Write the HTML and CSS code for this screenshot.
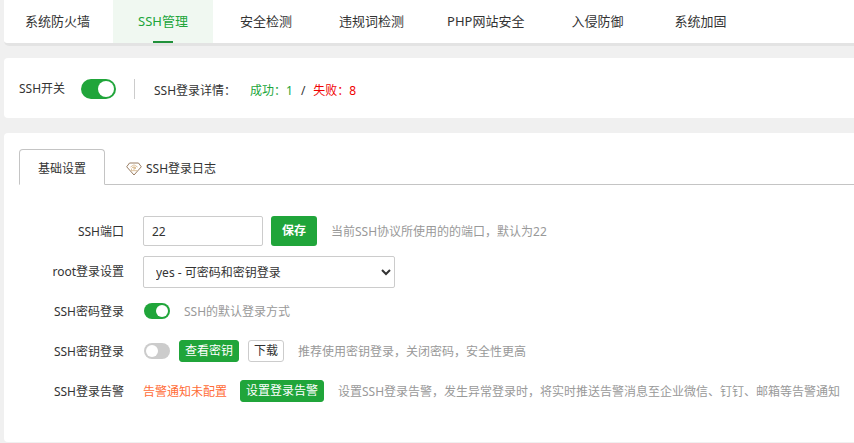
FILE: index.html
```html
<!DOCTYPE html>
<html lang="zh-CN">
<head>
<meta charset="utf-8">
<meta name="viewport" content="width=device-width, initial-scale=1">
<title>SSH管理</title>
<link rel="stylesheet" href="styles.css">
</head>
<body>
<nav class="nav">
  <a class="nav-item" href="#">系统防火墙</a>
  <a class="nav-item active" href="#">SSH管理</a>
  <a class="nav-item" href="#">安全检测</a>
  <a class="nav-item" href="#">违规词检测</a>
  <a class="nav-item" href="#">PHP网站安全</a>
  <a class="nav-item" href="#">入侵防御</a>
  <a class="nav-item" href="#">系统加固</a>
</nav>
<main>
  <section class="card status">
    <label class="status-label" for="ssh-switch">SSH开关</label>
    <input class="switch switch-large" id="ssh-switch" type="checkbox" checked>
    <div class="login-detail">
      <span class="detail-title">SSH登录详情：</span>
      <a class="success" href="#">成功：1</a>
      <span class="slash">/</span>
      <a class="failure" href="#">失败：8</a>
    </div>
  </section>
  <section class="card settings">
    <div class="tabs">
      <button class="tab selected" type="button">基础设置</button>
      <button class="tab" type="button">
        <svg class="gem" viewBox="0 0 16 14" aria-hidden="true">
          <path class="gem-outline" d="M3.500 1h9L15.300 4.800 8 13 .7 4.800z"/>
          <path class="gem-detail" d="M4.500 5L8 2.800 11.500 5M8 4v4.500M6 5.500h4M5.500 6.500v2M8 6.500h2M5 8.700h6"/>
        </svg>
        SSH登录日志
      </button>
    </div>
    <form class="form">
      <div class="row">
        <label class="row-label" for="port">SSH端口</label>
        <input class="field" id="port" type="text" value="22">
        <button class="save" type="button">保存</button>
        <span class="hint">当前SSH协议所使用的的端口，默认为22</span>
      </div>
      <div class="row">
        <label class="row-label" for="root">root登录设置</label>
        <select class="field select" id="root">
          <option>yes - 可密码和密钥登录</option>
        </select>
      </div>
      <div class="row">
        <label class="row-label" for="password-login">SSH密码登录</label>
        <input class="switch" id="password-login" type="checkbox" checked>
        <span class="hint">SSH的默认登录方式</span>
      </div>
      <div class="row">
        <label class="row-label" for="key-login">SSH密钥登录</label>
        <input class="switch" id="key-login" type="checkbox">
        <button class="small-button primary" type="button">查看密钥</button>
        <button class="small-button" type="button">下载</button>
        <span class="hint">推荐使用密钥登录，关闭密码，安全性更高</span>
      </div>
      <div class="row">
        <span class="row-label">SSH登录告警</span>
        <a class="warning" href="#">告警通知未配置</a>
        <button class="small-button primary" type="button">设置登录告警</button>
        <span class="hint">设置SSH登录告警，发生异常登录时，将实时推送告警消息至企业微信、钉钉、邮箱等告警通知</span>
      </div>
    </form>
  </section>
</main>
</body>
</html>
```
FILE: styles.css
```css
* {
  box-sizing: border-box;
}

body {
  margin: 0;
  padding-left: 4px;
  background: #f0f0f0;
  color: #333;
  font: 12px/20px "Noto Sans", "Noto Sans CJK SC", sans-serif;
  overflow-x: hidden;
}

a {
  color: inherit;
  text-decoration: none;
}

button,
input,
select {
  margin: 0;
  color: inherit;
  font: inherit;
}

button {
  padding: 0;
  border: 0;
  background: none;
  white-space: nowrap;
}

.nav {
  display: flex;
  gap: 3px;
  padding-left: 1px;
  background: #fff;
  border-bottom: 3px solid #e3e3e3;
  border-radius: 0 0 0 5px;
  font-size: 13px;
  line-height: 43px;
}

.nav-item {
  position: relative;
  min-width: 100px;
  padding: 0 20px;
  text-align: center;
  white-space: nowrap;
}

.nav-item.active {
  background: #f0f8f1;
  color: #20a53a;
}

.nav-item.active::after {
  content: "";
  position: absolute;
  bottom: 0;
  left: 40px;
  width: 20px;
  height: 2px;
  background: #20913a;
}

.card {
  background: #fff;
  border-radius: 4px 0 0 4px;
}

.status {
  display: flex;
  align-items: center;
  height: 60px;
  margin: 12px 0 15px;
  padding: 2px 0 0 15px;
}

.status-label {
  width: 62px;
}

.switch {
  appearance: none;
  flex: none;
  display: flex;
  width: 26px;
  height: 16px;
  margin-left: 1px;
  padding: 2px;
  border-radius: 10px;
  background: #ccc;
}

.switch::before {
  content: "";
  width: 12px;
  height: 12px;
  border-radius: 50%;
  background: #fff;
}

.switch:checked {
  justify-content: flex-end;
  background: #20a53a;
}

.switch-large {
  width: 35px;
  height: 20px;
  margin-left: 0;
}

.switch-large::before {
  width: 16px;
  height: 16px;
}

.login-detail {
  display: flex;
  height: 20px;
  margin-left: 18px;
  padding-left: 19px;
  border-left: 1px solid #ccc;
  line-height: 24px;
  white-space: nowrap;
}

.detail-title {
  width: 96px;
}

.success {
  color: #20a53a;
}

.slash {
  margin: 0 8px;
}

.failure {
  color: #f00000;
}

.settings {
  padding: 16px 0 31px 15px;
}

.tabs {
  display: flex;
}

.tabs::after {
  content: "";
  flex: 1;
  border-bottom: 1px solid #c4c4c4;
}

.tab {
  display: flex;
  align-items: center;
  gap: 4px;
  height: 36px;
  padding: 4px 0 0 21px;
  border-bottom: 1px solid #c4c4c4;
}

.tab.selected {
  padding: 3px 18px 0;
  border: 1px solid #c4c4c4;
  border-bottom-color: #fff;
  border-radius: 4px 4px 0 0;
}

.gem {
  width: 16px;
  height: 14px;
  fill: none;
  stroke-linejoin: round;
}

.gem-outline {
  stroke: #987c62;
}

.gem-detail {
  stroke: #dec29c;
}

.form {
  margin-top: 26px;
}

.row {
  display: flex;
  align-items: center;
  height: 40px;
  white-space: nowrap;
}

.row-label,
.hint,
.warning {
  padding-top: 2px;
}

.row-label {
  width: 105px;
  margin-right: 19px;
  text-align: right;
}

.field {
  width: 120px;
  height: 30px;
  padding: 0 8px;
  border: 1px solid #ccc;
  border-radius: 2px;
  background: #fff;
}

.select {
  width: 252px;
  height: 32px;
  margin-top: 2px;
}

.save {
  width: 46px;
  height: 30px;
  margin-left: 8px;
  border-radius: 3px;
  background: #20a53a;
  color: #fff;
  font-weight: bold;
}

.small-button {
  height: 22px;
  margin-left: 9px;
  padding: 0 5px;
  border: 1px solid #ccc;
  border-radius: 3px;
}

.small-button.primary {
  border-color: #20a53a;
  background: #20a53a;
  color: #fff;
}

.hint {
  margin-left: 14px;
  color: #999;
}

.warning {
  margin-right: 4px;
  color: #ff6c37;
}
```
